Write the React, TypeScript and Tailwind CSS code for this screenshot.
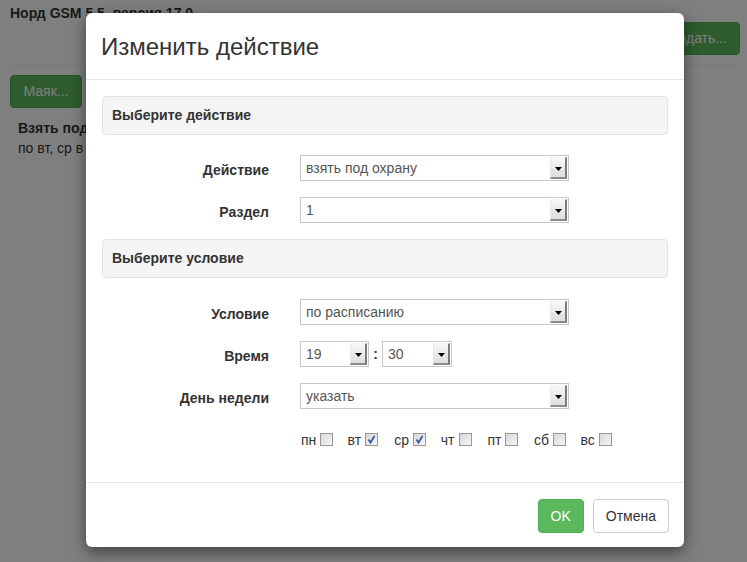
import { ReactNode } from 'react';

const font = { fontFamily: '"Liberation Sans", Arial, sans-serif' };

function Arrow() {
  return (
    <div className="absolute right-[1px] top-[1px] bottom-[1px] w-[17px] flex items-center justify-center bg-gradient-to-b from-[#f7f7f7] to-[#dedede] border-l border-t border-l-[#e8e8e8] border-t-[#f4f4f4] border-r-2 border-b-2 border-r-[#7a7a7a] border-b-[#8c8c8c]">
      <svg width="7" height="4" viewBox="0 0 7 4" className="mt-[2px]">
        <path d="M0 0 H7 L3.5 4 Z" fill="#000" />
      </svg>
    </div>
  );
}

function FakeSelect({ value, width }: { value: string; width: string }) {
  return (
    <div className={`relative h-[26px] border border-[#c9c9c9] bg-white flex items-center pl-[5px] pt-[1px] text-[14px] text-[#555] ${width}`}>
      {value}
      <Arrow />
    </div>
  );
}

function Row({ label, children }: { label: string; children: ReactNode }) {
  return (
    <div className="flex items-center h-[26px]">
      <div className="w-[167px] text-right font-bold text-[14px] text-[#333] pt-[5px]">{label}</div>
      <div className="ml-[31px] flex items-center">{children}</div>
    </div>
  );
}

function Check({ checked }: { checked?: boolean }) {
  return (
    <span className="relative inline-block w-[13px] h-[13px] border border-[#979797] bg-gradient-to-br from-[#d8d8d8] to-[#f6f6f6]">
      {checked && (
        <svg width="11" height="11" viewBox="0 0 11 11" className="absolute left-0 top-0">
          <path d="M2.5 5.5 L4.5 8.5 L8.5 2" stroke="#3b56a8" strokeWidth="1.8" fill="none" />
        </svg>
      )}
    </span>
  );
}

const days = [
  { d: 'пн', c: false },
  { d: 'вт', c: true },
  { d: 'ср', c: true },
  { d: 'чт', c: false },
  { d: 'пт', c: false },
  { d: 'сб', c: false },
  { d: 'вс', c: false },
];

export default function App() {
  return (
    <div className="relative w-full h-[562px] overflow-hidden bg-white text-[#333]" style={font}>
      {/* page under the dialog */}
      <div className="px-[10px]">
        <div className="flex justify-between h-[66px] border-b border-[#eee]">
          <div className="font-bold text-[14px] pt-[3px]">Норд GSM 5.5, версия 17.0</div>
          <div className="mt-[22px] h-[33px] px-[12px] mr-[-3px] flex items-center rounded bg-[#5cb85c] border border-[#4cae4c] text-white text-[14px]">
            Создать...
          </div>
        </div>
        <div className="mt-[9px] w-[72px] h-[33px] flex items-center justify-center rounded bg-[#5cb85c] border border-[#4cae4c] text-white text-[14px]">
          Маяк...
        </div>
        <div className="pl-[8px] mt-[10px] text-[14px] leading-[20px]">
          <div className="font-bold">Взять под охрану</div>
          <div>по вт, ср в 19:30</div>
        </div>
      </div>

      <div className="absolute inset-0 bg-black/50" />

      {/* dialog */}
      <div className="absolute left-[86px] top-[13px] w-[598px] bg-white rounded-[6px] shadow-[0_5px_15px_rgba(0,0,0,0.5)]">
        <div className="h-[67px] px-[15px] flex items-center border-b border-[#e5e5e5]">
          <h4 className="text-[24px] text-[#333] pt-[1px]">Изменить действие</h4>
        </div>

        <div className="px-[16px] pt-[16px] pb-[36px]">
          <div className="h-[39px] bg-[#f5f5f5] border border-[#e3e3e3] rounded px-[9px] flex items-center font-bold text-[14px]">
            Выберите действие
          </div>
          <div className="mt-[20px] flex flex-col gap-[16px]">
            <Row label="Действие">
              <FakeSelect value="взять под охрану" width="w-[269px]" />
            </Row>
            <Row label="Раздел">
              <FakeSelect value="1" width="w-[269px]" />
            </Row>
          </div>

          <div className="mt-[16px] h-[39px] bg-[#f5f5f5] border border-[#e3e3e3] rounded px-[9px] flex items-center font-bold text-[14px]">
            Выберите условие
          </div>
          <div className="mt-[21px] flex flex-col gap-[16px]">
            <Row label="Условие">
              <FakeSelect value="по расписанию" width="w-[269px]" />
            </Row>
            <Row label="Время">
              <FakeSelect value="19" width="w-[69px]" />
              <span className="w-[13px] text-center font-bold text-[14px]">:</span>
              <FakeSelect value="30" width="w-[70px]" />
            </Row>
            <Row label="День недели">
              <FakeSelect value="указать" width="w-[269px]" />
            </Row>
          </div>

          <div className="mt-[24px] ml-[199px] flex h-[13px] items-center">
            {days.map((x) => (
              <div key={x.d} className="w-[46.6px] flex items-center text-[14px] text-[#333]">
                <span className="leading-[13px] pt-[1px]">{x.d}</span>
                <span className="ml-[4px] flex">
                  <Check checked={x.c} />
                </span>
              </div>
            ))}
          </div>
        </div>

        <div className="border-t border-[#e5e5e5] pt-[16px] pb-[14px] pr-[15px] flex justify-end gap-[9px]">
          <button className="h-[34px] px-[12px] rounded bg-[#5cb85c] border border-[#4cae4c] text-white text-[14px]">OK</button>
          <button className="h-[34px] px-[12px] rounded bg-white border border-[#ccc] text-[#333] text-[14px]">Отмена</button>
        </div>
      </div>
    </div>
  );
}
